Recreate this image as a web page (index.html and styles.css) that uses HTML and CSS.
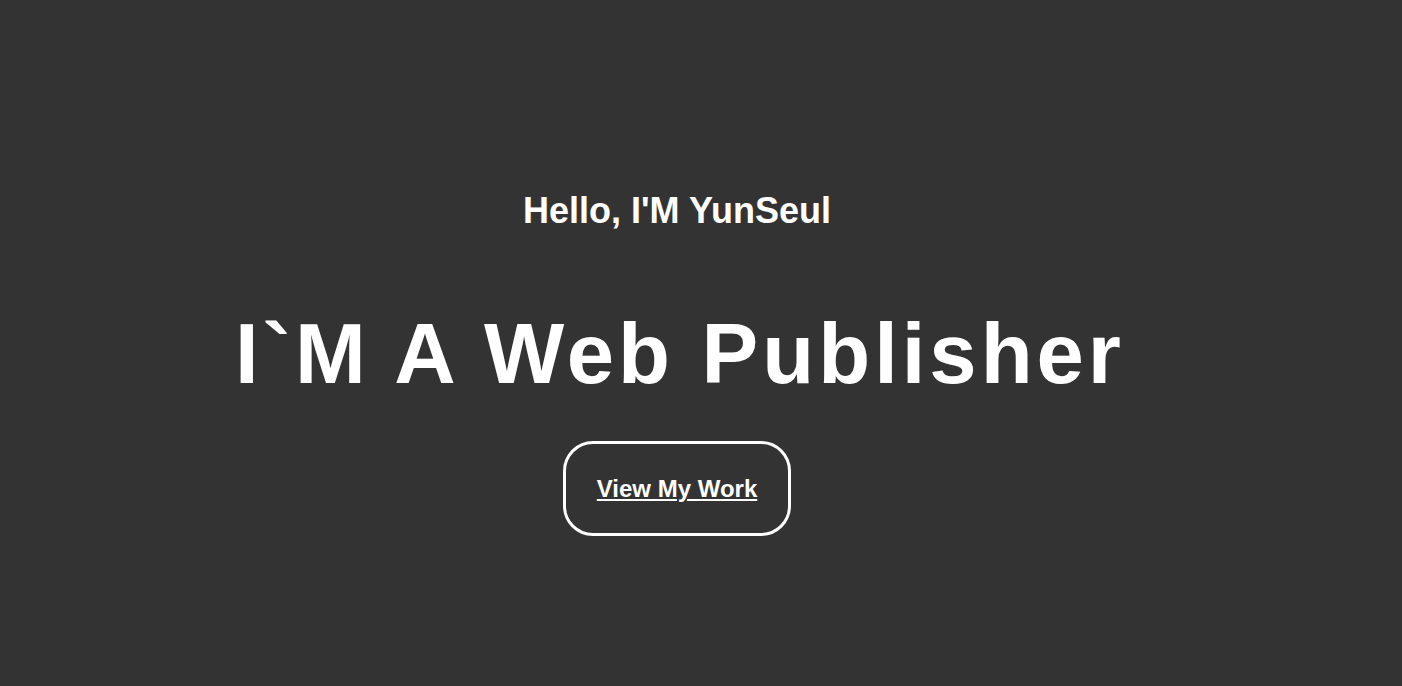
FILE: index.html
```html
<!DOCTYPE html>
<html lang="en">
<head>
<meta charset="utf-8">
<title>YunSeul</title>
<link rel="stylesheet" href="styles.css">
</head>
<body>
<main class="hero">
  <h2 class="hello">Hello, I'M YunSeul</h2>
  <h1 class="title">I`M A Web Publisher</h1>
  <a class="btn" href="#work">View My Work</a>
</main>
</body>
</html>
```
FILE: styles.css
```css
html, body {
  margin: 0;
  padding: 0;
}
body {
  background: #333333;
  color: #ffffff;
  font-family: "Liberation Sans", Arial, sans-serif;
  height: 686px;
  overflow: hidden;
}
.hero {
  display: flex;
  flex-direction: column;
  align-items: center;
  padding: 190px 48px 0 0;
}
.hello {
  margin: 0;
  font-size: 36px;
  font-weight: 700;
  line-height: 1.15;
}
.title {
  margin: 74px 0 0;
  padding-left: 6px;
  font-size: 85px;
  font-weight: 700;
  line-height: 1.15;
  letter-spacing: 4px;
}
.btn {
  margin-top: 38px;
  display: inline-block;
  padding: 31px 31px 30px;
  border: 3px solid #ffffff;
  border-radius: 30px;
  color: #ffffff;
  font-size: 24px;
  font-weight: 700;
  line-height: 1.15;
  text-decoration: underline;
}
```
